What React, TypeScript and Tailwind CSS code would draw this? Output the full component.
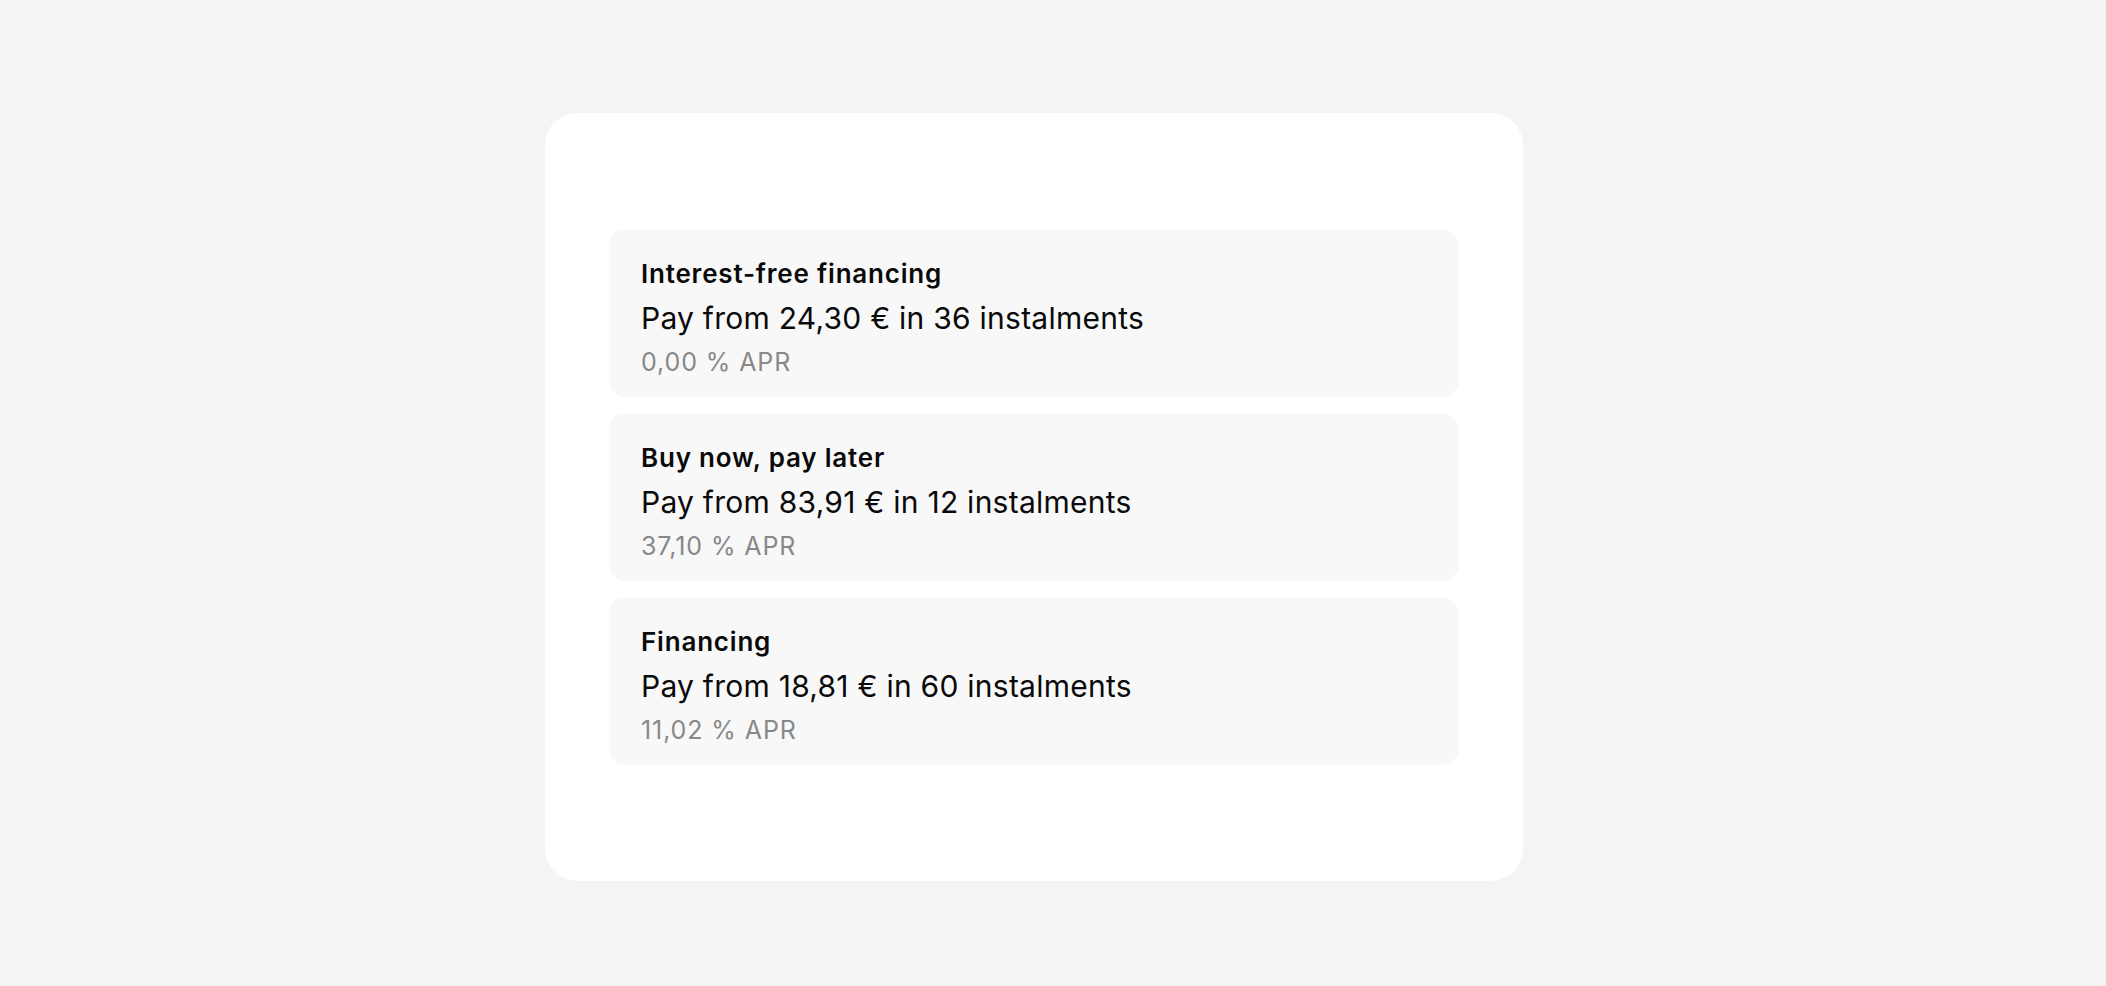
import React from "react";

const options = [
  { title: "Interest-free financing", main: "Pay from 24,30 € in 36 instalments", apr: "0,00 % APR" },
  { title: "Buy now, pay later", main: "Pay from 83,91 € in 12 instalments", apr: "37,10 % APR" },
  { title: "Financing", main: "Pay from 18,81 € in 60 instalments", apr: "11,02 % APR" },
];

export default function App() {
  return (
    <div
      className="min-h-[986px] w-full bg-[#f4f4f4] pl-[545px] pt-[113px]"
      style={{ fontFamily: "Inter, 'Noto Sans', sans-serif" }}
    >
      <div className="flex w-[978px] flex-col gap-4 rounded-[32px] bg-white px-16 py-[116px]">
        {options.map((o) => (
          <div key={o.title} className="flex flex-col rounded-2xl bg-[#f8f8f8] px-8 pb-[18px] pt-[28px]">
            <div className="text-[26px] font-semibold leading-[34px] tracking-[0.8px] text-[#0a0a0a]">{o.title}</div>
            <div className="mt-2 text-[30px] leading-[38px] tracking-[0.25px] text-[#0a0a0a]">{o.main}</div>
            <div className="mt-2 text-[25px] leading-[34px] tracking-[0.9px] text-[#888888]">{o.apr}</div>
          </div>
        ))}
      </div>
    </div>
  );
}
